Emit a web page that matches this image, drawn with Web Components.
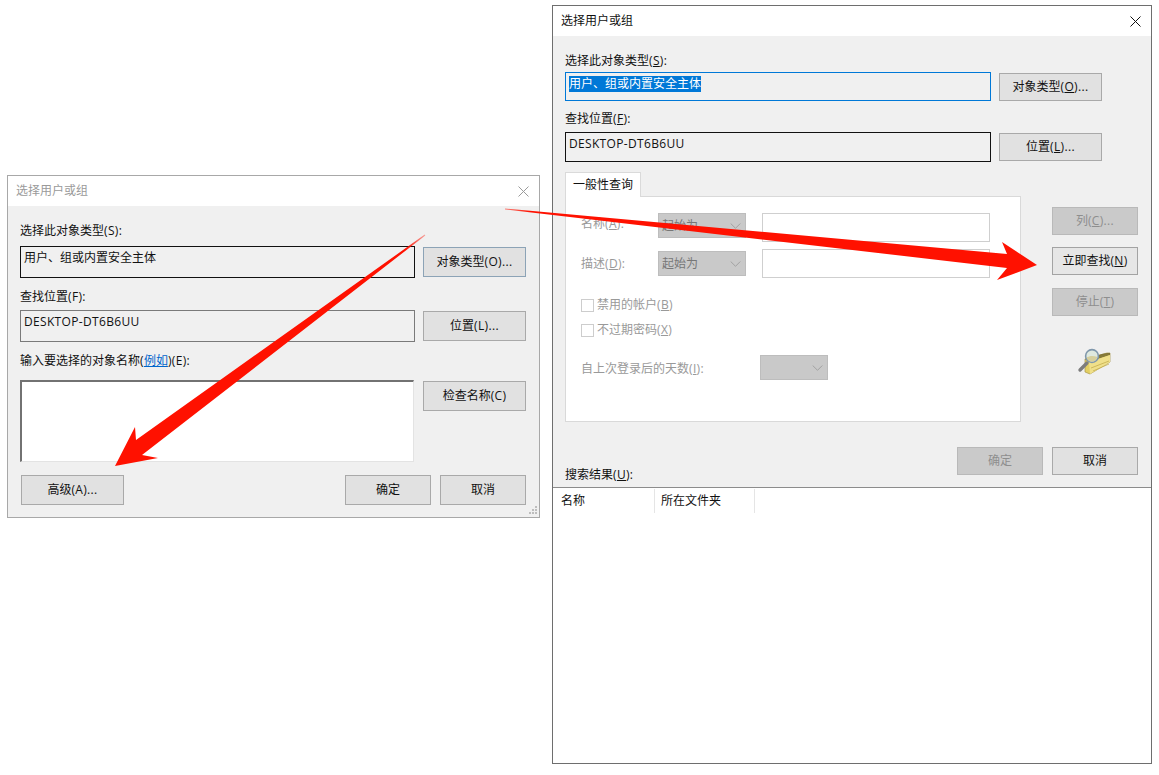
<!DOCTYPE html>
<html lang="zh-CN">
<head>
<meta charset="utf-8">
<title>选择用户或组</title>
<style>
html,body{margin:0;padding:0;background:#fff;}
body{width:1159px;height:775px;overflow:hidden;position:relative;font:12px/16px "Open Sans","Noto Sans CJK SC",sans-serif;color:#111;}
</style>
</head>
<body>
<basic-dialog></basic-dialog>
<advanced-dialog></advanced-dialog>
<red-arrows></red-arrows>
<script>
function latin(html){
  return html.replace(/>([^<]*)</g,(m,t)=>'>'+t.replace(/[!-~]+/g,'<span class="l">$&</span>')+'<');
}
function def(name, css, html){
  customElements.define(name, class extends HTMLElement{
    constructor(){
      super();
      const r=this.attachShadow({mode:'open'});
      r.innerHTML='<style>*{box-sizing:border-box}.l{letter-spacing:.33px}'+css+'</style>'+latin(html);
    }
  });
}

def('win-window',`
:host{display:flex;flex-direction:column;position:absolute;background:#f0f0f0;border:1px solid var(--edge,#a6a6a6);box-sizing:border-box;}
.bar{flex:none;height:30px;background:#fff;display:flex;align-items:center;justify-content:space-between;padding:0 0 0 8px;color:var(--title,#111);}
.x{width:11px;height:11px;margin-right:10px;display:block;}
.body{flex:1;min-height:0;display:flex;flex-direction:column;}
`,`<div class="bar"><slot name="title"></slot><svg class="x" viewBox="0 0 11 11"><path d="M.5.5l10 10M10.5.5l-10 10" fill="none" stroke="var(--title,#111)" stroke-width="1"/></svg></div><div class="body"><slot></slot></div>`);

def('win-button',`
:host{display:flex;align-items:center;justify-content:center;flex:none;width:var(--w,103px);height:var(--h,30px);background:#e1e1e1;border:1px solid #a9a9a9;color:#111;white-space:nowrap;box-sizing:border-box;padding-bottom:1px;}
:host([off]){background:#cacaca;border-color:#b9b9b9;color:#8e8e8e;}
:host([hot]){border-color:#8ca3b6;}
:host([main]){border-color:#a3a3a3;background:#e6e6e6;}
`,`<slot></slot>`);

def('win-field',`
:host{display:block;flex:none;border:1px solid #111;padding:3px 3px;white-space:nowrap;color:#111;box-sizing:border-box;}
:host([soft]){border-color:#7a7a7a;}
:host([focus]){border-color:#0078d7;}
:host([blank]){background:#fff;border:1px solid #cfcfcf;}
:host([area]){background:#fff;border-width:2px 1px 1px 2px;border-style:solid;border-color:#727272 #e3e3e3 #e3e3e3 #727272;}
`,`<slot></slot>`);

def('win-combo',`
:host{display:flex;align-items:center;justify-content:space-between;flex:none;background:#c9c9c9;border:1px solid #bdbdbd;height:25px;padding:0 4px 0 3px;color:#777;box-sizing:border-box;}
svg{width:11px;height:6px;display:block;}
`,`<span><slot></slot></span><svg viewBox="0 0 11 6"><path d="M.7.5l4.800 4.800L10.300.5" fill="none" stroke="#a2a2a2"/></svg>`);

def('win-check',`
:host{display:flex;align-items:center;gap:3px;color:#999;}
i{display:block;width:13px;height:13px;background:#fff;border:1px solid #cdcdcd;}
`,`<i></i><span><slot></slot></span>`);

def('basic-dialog',`
:host{display:block;}
win-window{left:7px;top:175px;width:533px;height:343px;--title:#9a9a9a;--edge:#a8a8a8;}
.stack{display:flex;flex-direction:column;padding:16px 13px 0 12px;height:100%;position:relative;}
.row{display:flex;gap:8px;align-items:center;}
.lb{height:16px;line-height:18px;}
.f{width:395px;}
a{color:#0066cc;text-decoration:underline;}
.grip{position:absolute;right:2px;bottom:1px;width:10px;height:10px;}
.end{display:flex;margin-left:1px;}
.ok{margin-left:auto;--w:86px;}
.no{margin-left:9px;--w:86px;}
`,`
<win-window>
 <span slot="title">选择用户或组</span>
 <div class="stack">
  <div class="lb">选择此对象类型(S):</div>
  <div class="row" style="margin-top:8px"><win-field class="f" style="height:32px">用户、组或内置安全主体</win-field><win-button hot>对象类型(O)...</win-button></div>
  <div class="lb" style="margin-top:10px">查找位置(F):</div>
  <div class="row" style="margin-top:6px"><win-field class="f" soft style="height:32px">DESKTOP-DT6B6UU</win-field><win-button>位置(L)...</win-button></div>
  <div class="lb" style="margin-top:10px">输入要选择的对象名称(<a>例如</a>)(E):</div>
  <div class="row" style="margin-top:12px;align-items:flex-start"><win-field class="f" area style="height:82px;width:394px"></win-field><win-button style="margin:1px 0 0 1px">检查名称(C)</win-button></div>
  <div class="end" style="margin-top:13px"><win-button>高级(A)...</win-button><win-button class="ok">确定</win-button><win-button class="no">取消</win-button></div>
  <svg class="grip" viewBox="0 0 10 10"><path fill="#bdbdbd" d="M8 0h2v2H8zM5 3h2v2H5zM8 3h2v2H8zM2 6h2v2H2zM5 6h2v2H5zM8 6h2v2H8z"/></svg>
 </div>
</win-window>`);

def('advanced-dialog',`
:host{display:block;}
win-window{left:552px;top:5px;width:600px;height:759px;--edge:#6e6e6e;--title:#111;}
.stack{display:flex;flex-direction:column;padding:16px 13px 0 12px;flex:none;height:451px;}
.row{display:flex;gap:8px;align-items:center;}
.lb{height:16px;line-height:18px;}
.f{width:426px;}
u{text-underline-offset:1px;}
.sel{background:#0078d7;color:#fff;display:inline-block;height:16px;}
.mid{display:flex;gap:31px;margin-top:10px;}
.tabwrap{display:flex;flex-direction:column;width:456px;}
.tab{width:76px;height:25px;background:#fff;border:1px solid #dadada;border-bottom:0;padding:4px 0 0 7px;margin-bottom:-1px;position:relative;z-index:1;}
.panel{height:226px;background:#fff;border:1px solid #d9d9d9;padding:16px 0 0 15px;color:#999;}
.q{display:grid;grid-template-columns:77px 88px 228px;column-gap:0;align-items:center;}
.q win-field{margin-left:16px;width:228px;height:29px;}
.side{display:flex;flex-direction:column;margin-top:35px;--w:86px;--h:28px;}
.bot{display:flex;margin-top:25px;}
.bot .lb{margin-top:19px;}
.list{flex:1;background:#fff;border-top:1px solid #8c8c8c;display:flex;align-items:flex-start;padding-top:1px;}
.h{height:24px;border-right:1px solid #e5e5e5;padding:4px 0 0 8px;width:102px;}
.h+.h{width:100px;padding-left:6px;}
.icon{width:36px;height:30px;margin:32px 0 0 25px;display:block;}
.days{display:flex;align-items:center;margin-top:17px;}
`,`
<win-window>
 <span slot="title">选择用户或组</span>
 <div class="stack">
  <div class="lb">选择此对象类型(<u>S</u>):</div>
  <div class="row" style="margin-top:4px"><win-field class="f" focus style="height:29px"><span class="sel">用户、组或内置安全主体</span></win-field><win-button style="--h:28px;align-self:flex-end">对象类型(<u>O</u>)...</win-button></div>
  <div class="lb" style="margin-top:9px">查找位置(<u>F</u>):</div>
  <div class="row" style="margin-top:6px"><win-field class="f" style="height:30px">DESKTOP-DT6B6UU</win-field><win-button style="--h:28px">位置(<u>L</u>)...</win-button></div>
  <div class="mid">
   <div class="tabwrap">
    <div class="tab">一般性查询</div>
    <div class="panel">
     <div class="q">
      <span style="align-self:start;margin-top:3px">名称(<u>A</u>):</span><win-combo style="align-self:start">起始为</win-combo><win-field blank></win-field>
     </div>
     <div class="q" style="margin-top:7px">
      <span>描述(<u>D</u>):</span><win-combo>起始为</win-combo><win-field blank></win-field>
     </div>
     <win-check style="margin-top:19px">禁用的帐户(<u>B</u>)</win-check>
     <win-check style="margin-top:9px">不过期密码(<u>X</u>)</win-check>
     <div class="days"><span style="width:179px;padding-top:2px">自上次登录后的天数(<u>I</u>):</span><win-combo style="width:68px"></win-combo></div>
    </div>
   </div>
   <div class="side">
    <win-button off>列(<u>C</u>)...</win-button>
    <win-button main style="margin-top:12px">立即查找(<u>N</u>)</win-button>
    <win-button off style="margin-top:13px">停止(<u>T</u>)</win-button>
    <svg class="icon" viewBox="0 0 36 30">
     <path d="M8 11l22-6 3 0v9L13 26l-5-2z" fill="#e3cf62" stroke="#a8964a" stroke-width=".7"/>
     <path d="M8 11l4 3 21-7v-2l-3 0-5 1z" fill="#6f6530" opacity=".8"/>
     <path d="M12 14l21-7v7L13 26z" fill="#f0e08a"/>
     <path d="M14 20l18-7M16 23l16-7" stroke="#c4ad4e" stroke-width=".8" fill="none"/>
     <path d="M3 22l7-7" stroke="#7d7d7d" stroke-width="3.400" stroke-linecap="round"/>
     <circle cx="15" cy="8" r="6.400" fill="#dfe9df" stroke="#7f97ab" stroke-width="1.600"/>
     <path d="M9.500 9.500c3-2 7-2 11-.6-1 3-3.500 5-6 4.800-2.500-.2-4.500-2-5-4.200z" fill="#d6cf9c"/>
    </svg>
   </div>
  </div>
  <div class="bot">
   <div class="lb">搜索结果(<u>U</u>):</div>
   <win-button off style="margin-left:auto;--w:86px;--h:28px">确定</win-button>
   <win-button style="margin-left:9px;--w:86px;--h:28px">取消</win-button>
  </div>
 </div>
 <div class="list"><div class="h">名称</div><div class="h">所在文件夹</div></div>
</win-window>`);

def('red-arrows',`
:host{display:block;position:absolute;left:0;top:0;width:1159px;height:775px;pointer-events:none;}
svg{display:block;}
`,`<svg width="1159" height="775" viewBox="0 0 1159 775">
<defs>
 <linearGradient id="a" gradientUnits="userSpaceOnUse" x1="425" y1="235" x2="405" y2="249"><stop offset="0" stop-color="#ff1100" stop-opacity=".35"/><stop offset="1" stop-color="#ff1100"/></linearGradient>
 <linearGradient id="b" gradientUnits="userSpaceOnUse" x1="505" y1="209" x2="530" y2="211"><stop offset="0" stop-color="#ff1100" stop-opacity=".5"/><stop offset="1" stop-color="#ff1100"/></linearGradient>
</defs>
<path fill="url(#a)" d="M425.300 235.400L424.700 234.600L136 440L135 427L115 466L158 458L142 455Z"/>
<path fill="url(#b)" d="M505 208.500L1007 254L1002 242L1037 265L997 280L1007 268L505 209.500Z"/>
</svg>`);
</script>
</body>
</html>
